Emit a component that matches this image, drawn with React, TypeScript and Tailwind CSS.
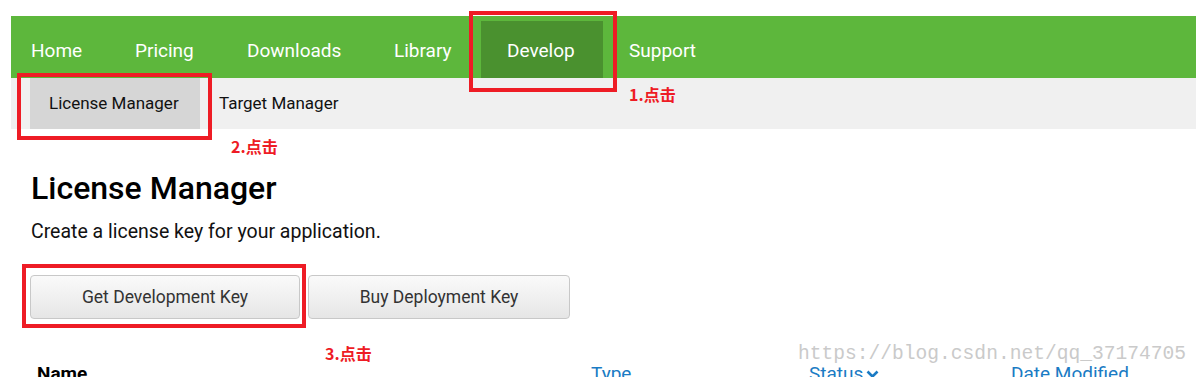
import React from 'react';

const navItems = [
  { label: 'Home', w: 'w-[98px] pl-[20px]' },
  { label: 'Pricing', w: 'w-[112px] pl-[26px]' },
  { label: 'Downloads', w: 'w-[147px] pl-[26px]' },
  { label: 'Library', w: 'w-[113px] pl-[26px]' },
  { label: 'Develop', w: 'w-[122px] pl-[26px]', active: true },
  { label: 'Support', w: 'w-[120px] pl-[26px]' },
];

const Note: React.FC<{ text: string; className: string }> = ({ text, className }) => (
  <span
    className={`absolute text-[16px] font-bold text-[#ee1c25] leading-none ${className}`}
    style={{ fontFamily: '"Noto Sans CJK SC", "Noto Sans", sans-serif' }}
  >
    {text}
  </span>
);

export default function App() {
  return (
    <div className="relative h-[377px] w-full overflow-hidden bg-white pt-[16px] font-['Roboto',sans-serif]">
      <div className="ml-[11px] mr-[4px]">
        {/* top nav */}
        <nav className="flex h-[62px] items-end bg-[#5db73c]">
          {navItems.map((item) => (
            <a
              key={item.label}
              className={`flex h-[57px] items-center pt-[3px] text-[19px] text-white ${item.w} ${
                item.active ? 'bg-[#4a912f]' : ''
              }`}
            >
              {item.label}
            </a>
          ))}
        </nav>

        {/* sub nav */}
        <div className="flex h-[51px] bg-[#f0f0f0] pl-[19px] text-[17px] text-[#111]">
          <div className="flex w-[170px] items-center bg-[#d6d6d6] pl-[19px]">License Manager</div>
          <div className="flex items-center pl-[19px]">Target Manager</div>
        </div>

        <div className="pl-[20px]">
          <h1 className="mt-[41px] text-[32px] font-medium leading-[36px] text-black">License Manager</h1>
          <p className="mt-[14px] text-[19.5px] leading-[24px] text-[#111]">Create a license key for your application.</p>

          <div className="-ml-[1px] mt-[31px] flex gap-[8px]">
            <button className="h-[44px] w-[270px] rounded-[4px] border border-[#c8c8c8] bg-gradient-to-b from-[#fafafa] to-[#e6e6e6] text-[17.5px] text-[#333]">
              Get Development Key
            </button>
            <button className="h-[44px] w-[262px] rounded-[4px] border border-[#c8c8c8] bg-gradient-to-b from-[#fafafa] to-[#e6e6e6] text-[17.5px] text-[#333]">
              Buy Deployment Key
            </button>
          </div>

          <div className="mt-[43px] flex text-[19px] leading-[24px]">
            <div className="w-[560px] pl-[6px] font-bold text-black">Name</div>
            <div className="w-[218px] text-[#1a7bc4]">Type</div>
            <div className="flex w-[202px] items-center gap-[3px] text-[#1a7bc4]">
              Status
              <svg width="13" height="9" viewBox="0 0 13 9" fill="none">
                <path d="M1.5 1.5L6.5 6.5L11.5 1.5" stroke="#1a7bc4" strokeWidth="2.6" />
              </svg>
            </div>
            <div className="text-[#1a7bc4]">Date Modified</div>
          </div>
        </div>
      </div>

      {/* annotations */}
      <div className="absolute left-[469px] top-[11px] h-[81px] w-[148px] border-[4px] border-[#ee1c25]" />
      <Note text="1.点击" className="left-[629px] top-[86px]" />
      <div className="absolute left-[17px] top-[73px] h-[67px] w-[195px] border-[4px] border-[#ee1c25]" />
      <Note text="2.点击" className="left-[231px] top-[138px]" />
      <div className="absolute left-[22px] top-[264px] h-[64px] w-[284px] border-[4px] border-[#ee1c25]" />
      <Note text="3.点击" className="left-[325px] top-[345px]" />

      <span className="absolute left-[798px] top-[345px] text-[19.6px] leading-none text-[#cacaca] font-['Liberation_Mono',monospace]">
        https://blog.csdn.net/qq_37174705
      </span>
    </div>
  );
}
